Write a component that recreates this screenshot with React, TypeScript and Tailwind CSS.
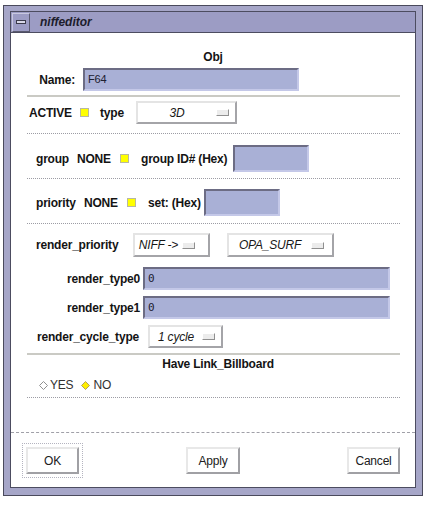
import React from 'react';

const font = { fontFamily: '"Liberation Sans", Arial, sans-serif' };

function Swatch() {
  return <span className="block w-[9px] h-[9px] bg-[#ffff00] border border-[#b8b8a0]" />;
}

function Field({ w, h, value, mono }: { w: string; h: string; value?: string; mono?: boolean }) {
  return (
    <div
      className={`${w} ${h} bg-[#a9b0d6] border-2 border-t-[#6c6c84] border-l-[#6c6c84] border-b-[#c4c8e8] border-r-[#c4c8e8] flex items-center pl-[3px] text-[11px] text-[#202030] leading-none`}
      style={mono ? { fontFamily: '"DejaVu Sans Mono", monospace' } : undefined}
    >
      {value}
    </div>
  );
}

function Option({ w, h, label, pad }: { w: string; h: string; label: string; pad: string }) {
  return (
    <div
      className={`${w} ${h} bg-white border-2 border-t-[#e4e4e4] border-l-[#e4e4e4] border-b-[#a4a4a8] border-r-[#a4a4a8] flex items-center`}
    >
      <span className="flex-1 text-center italic text-[12px] text-[#181818] leading-none">{label}</span>
      <span className={`${pad} w-[13px] h-[7px] bg-[#ececec] border border-t-[#ffffff] border-l-[#ffffff] border-b-[#909090] border-r-[#909090]`} />
    </div>
  );
}

function Diamond({ on }: { on: boolean }) {
  return (
    <svg width="9" height="9" viewBox="0 0 9 9">
      <polygon
        points="4.5,0.5 8.5,4.5 4.5,8.5 0.5,4.5"
        fill={on ? '#ffee00' : '#ffffff'}
        stroke={on ? '#b0a060' : '#909090'}
        strokeWidth="1"
      />
    </svg>
  );
}

function Button({ w, label }: { w: string; label: string }) {
  return (
    <div
      className={`${w} h-[27px] bg-white border-2 border-t-[#e8e8e8] border-l-[#e8e8e8] border-b-[#a0a0a4] border-r-[#a0a0a4] flex items-center justify-center text-[12px] text-[#202020]`}
    >
      {label}
    </div>
  );
}

export default function App() {
  return (
    <div className="min-h-[508px] bg-white pl-[3px] pt-[5px]" style={font}>
      <div className="w-[420px] h-[491px] border border-[#4a4a5c] bg-[#a6a6c8] px-[6px] pt-[5px]">
        <div className="border border-[#4c4c60] flex flex-col h-[477px]">
          {/* title bar */}
          <div className="h-[21px] bg-[#9c9cc4] border-b border-[#4c4c60] flex items-center">
            <div className="ml-[1px] w-[18px] h-[19px] border border-t-[#c8c8e0] border-l-[#c8c8e0] border-b-[#5a5a70] border-r-[#5a5a70] flex items-center justify-center">
              <span className="w-[10px] h-[4px] bg-[#d8d8e8] border border-[#3a3a4a]" />
            </div>
            <span className="ml-[10px] text-[12px] font-bold italic text-[#1c1c2c]">niffeditor</span>
          </div>

          {/* client */}
          <div className="flex-1 bg-white flex flex-col text-[12px] text-[#141414] tracking-[-0.2px]">
            <div className="mt-[17px] h-[14px] leading-[14px] text-center font-bold">Obj</div>

            <div className="mt-[4px] flex items-center">
              <span className="w-[64px] text-right font-bold">Name:</span>
              <span className="ml-[8px]"><Field w="w-[216px]" h="h-[23px]" value="F64" /></span>
            </div>

            <div className="mt-[4px] ml-[16px] mr-[15px] h-[2px] bg-[#cacac4]" />

            <div className="mt-[4px] h-[23px] flex items-center">
              <span className="ml-[18px] w-[51px] font-bold">ACTIVE</span>
              <Swatch />
              <span className="ml-[11px] w-[36px] font-bold">type</span>
              <Option w="w-[101px]" h="h-[23px]" label="3D" pad="mr-[6px]" />
            </div>

            <div className="mt-[9px] ml-[16px] mr-[15px] border-t border-dotted border-[#9c9ca4]" />

            <div className="mt-[11px] h-[27px] flex items-center">
              <span className="ml-[25px] w-[41px] font-bold">group</span>
              <span className="w-[43px] font-bold">NONE</span>
              <Swatch />
              <span className="ml-[12px] w-[92px] font-bold">group ID# (Hex)</span>
              <Field w="w-[76px]" h="h-[27px]" />
            </div>

            <div className="mt-[6px] ml-[16px] mr-[15px] border-t border-dotted border-[#9c9ca4]" />

            <div className="mt-[10px] h-[27px] flex items-center">
              <span className="ml-[25px] w-[48px] font-bold">priority</span>
              <span className="w-[43px] font-bold">NONE</span>
              <Swatch />
              <span className="ml-[12px] w-[56px] font-bold">set: (Hex)</span>
              <Field w="w-[76px]" h="h-[27px]" />
            </div>

            <div className="mt-[7px] ml-[16px] mr-[15px] border-t border-dotted border-[#9c9ca4]" />

            <div className="mt-[9px] h-[24px] flex items-center">
              <span className="ml-[25px] w-[97px] font-bold">render_priority</span>
              <Option w="w-[77px]" h="h-[24px]" label="NIFF ->" pad="mr-[13px]" />
              <span className="ml-[17px]">
                <Option w="w-[107px]" h="h-[24px]" label="OPA_SURF" pad="mr-[8px]" />
              </span>
            </div>

            <div className="mt-[10px] h-[23px] flex items-center">
              <span className="w-[129px] text-right font-bold">render_type0</span>
              <span className="ml-[3px]"><Field w="w-[247px]" h="h-[23px]" value="0" mono /></span>
            </div>

            <div className="mt-[6px] h-[23px] flex items-center">
              <span className="w-[129px] text-right font-bold">render_type1</span>
              <span className="ml-[3px]"><Field w="w-[247px]" h="h-[23px]" value="0" mono /></span>
            </div>

            <div className="mt-[6px] h-[23px] flex items-center">
              <span className="ml-[26px] w-[111px] font-bold">render_cycle_type</span>
              <Option w="w-[75px]" h="h-[23px]" label="1 cycle" pad="mr-[6px]" />
            </div>

            <div className="mt-[5px] ml-[16px] mr-[15px] h-[2px] bg-[#cacac4]" />

            <div className="mt-[2px] h-[14px] leading-[14px] pl-[10px] text-center font-bold">Have Link_Billboard</div>

            <div className="mt-[7px] h-[14px] flex items-center text-[12px] text-[#303030]">
              <span className="ml-[28px]"><Diamond on={false} /></span>
              <span className="ml-[2px]">YES</span>
              <span className="ml-[8px]"><Diamond on /></span>
              <span className="ml-[3px]">NO</span>
            </div>

            <div className="mt-[5px] ml-[16px] mr-[15px] border-t border-dotted border-[#9c9ca4]" />

            <div className="mt-[34px] border-t border-dashed border-[#a0a0a8]" />

            <div className="mt-[10px] flex items-center">
              <div className="ml-[11px] w-[61px] h-[35px] border border-dotted border-[#b4b4c0] flex items-center justify-center">
                <Button w="w-[53px]" label="OK" />
              </div>
              <span className="ml-[103px]"><Button w="w-[54px]" label="Apply" /></span>
              <span className="ml-[107px]"><Button w="w-[53px]" label="Cancel" /></span>
            </div>
          </div>
        </div>
      </div>
    </div>
  );
}
